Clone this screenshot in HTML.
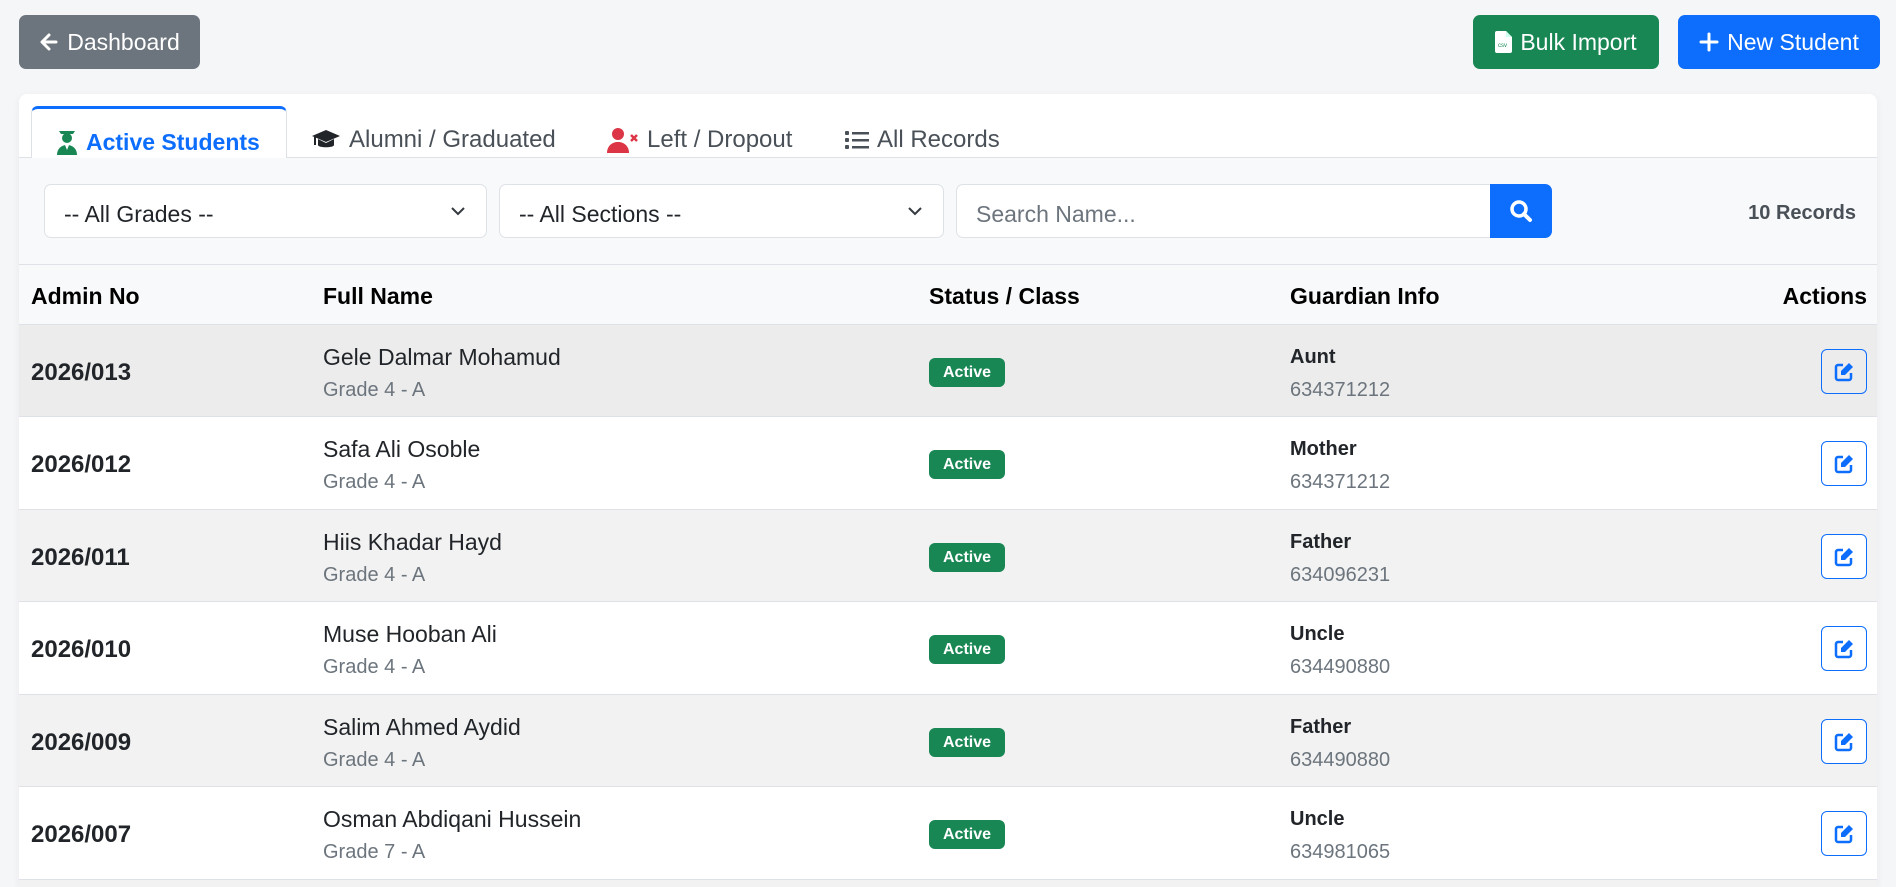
<!DOCTYPE html>
<html><head><meta charset="utf-8"><style>
*{box-sizing:border-box;margin:0;padding:0}
body{width:1896px;height:887px;overflow:hidden;background:#f5f6f8;font-family:"Liberation Sans",Arial,sans-serif;color:#212529;position:relative}
.abs{position:absolute}
.btn{position:absolute;border-radius:7px;color:#fff;font-size:23px;display:flex;align-items:center;justify-content:center;gap:8px}
.card{position:absolute;left:19px;top:94px;width:1858px;height:793px;background:#fff;border-radius:8px 8px 0 0;box-shadow:0 2px 8px rgba(0,0,0,.06);overflow:hidden}
.tab{position:absolute;top:20px;height:52px;font-size:24px;color:#495057;display:flex;align-items:center;gap:8px}
.sel{position:absolute;top:90px;height:54px;background:#fff;border:1px solid #dee2e6;border-radius:7px;font-size:23px;color:#212529;padding-left:19px;padding-top:6px;display:flex;align-items:center}
.chev{position:absolute;right:20px;top:18px}
.th{position:absolute;top:172px;height:60px;font-size:23px;font-weight:bold;color:#000;display:flex;align-items:center}
.row{position:absolute;left:0;width:1858px;height:92px;border-top:1px solid #dee2e6}
.adm{position:absolute;left:12px;top:2px;height:92px;display:flex;align-items:center;font-weight:bold;font-size:24px;color:#212529}
.nm{position:absolute;left:304px;top:19px;font-size:23px;color:#212529}
.sub{position:absolute;top:54px;font-size:20px;color:#6c757d}
.badge{position:absolute;left:910px;top:33px;width:76px;height:29px;background:#198754;color:#fff;border-radius:6px;font-weight:bold;font-size:16px;display:flex;align-items:center;justify-content:center}
.gd{position:absolute;left:1271px;top:21px;font-size:20px;font-weight:bold;color:#212529}
.ed{position:absolute;left:1802px;top:24px;width:46px;height:45px;border:1.5px solid #0d6efd;border-radius:6px;display:flex;align-items:center;justify-content:center}
</style></head><body>

<div class="btn" style="left:19px;top:15px;width:181px;height:54px;background:#6c757d">
<svg width="20" height="20" viewBox="0 0 20 20"><path d="M17 10H4M10 3L3 10l7 7" stroke="#fff" stroke-width="3" fill="none" stroke-linecap="round" stroke-linejoin="round"/></svg>Dashboard</div>

<div class="btn" style="left:1473px;top:15px;width:186px;height:54px;background:#198754">
<svg width="17" height="22" viewBox="0 0 17 22"><path d="M0 2a2 2 0 0 1 2-2h9l6 6v14a2 2 0 0 1-2 2H2a2 2 0 0 1-2-2z" fill="#fff"/><path d="M11 0v6h6" fill="#cfe" /><text x="3" y="16" font-size="6" fill="#198754" font-family="Liberation Sans">csv</text></svg>Bulk Import</div>

<div class="btn" style="left:1678px;top:15px;width:202px;height:54px;background:#0d6efd">
<svg width="20" height="20" viewBox="0 0 20 20"><path d="M10 2v16M2 10h16" stroke="#fff" stroke-width="3" stroke-linecap="round"/></svg>New Student</div>

<div class="card">
 <div class="abs" style="left:0;top:63px;width:1858px;height:1px;background:#dee2e6"></div>
 <div class="abs" style="left:12px;top:12px;width:256px;height:53px;background:#fff;border:1px solid #dee2e6;border-bottom:none;border-top:3px solid #0d6efd;border-radius:7px 7px 0 0"></div>
 <div class="tab" style="left:37px;color:#0d6efd;font-weight:bold;top:22px;font-size:23px">
  <svg width="22" height="26" viewBox="0 0 22 26"><path d="M3 2h16l-2 3H5z" fill="#198754"/><circle cx="11" cy="9" r="5" fill="#198754"/><path d="M1 26c0-6 4-10 10-10s10 4 10 10z" fill="#198754"/><path d="M9 16l2 5 2-5z" fill="#fff"/></svg>Active Students</div>
 <div class="tab" style="left:292px">
  <svg width="30" height="24" viewBox="0 0 30 24"><path d="M15 2L1 8l14 6 14-6z" fill="#212529"/><path d="M7 11v6c0 3 16 3 16 0v-6l-8 4z" fill="#212529"/><path d="M4 9v8" stroke="#212529" stroke-width="2"/></svg>Alumni / Graduated</div>
 <div class="tab" style="left:588px">
  <svg width="32" height="26" viewBox="0 0 32 26"><circle cx="11" cy="7" r="6" fill="#dc3545"/><path d="M0 26c0-7 5-11 11-11s11 4 11 11z" fill="#dc3545"/><path d="M24 8l6 6M30 8l-6 6" stroke="#dc3545" stroke-width="2.5"/></svg>Left / Dropout</div>
 <div class="tab" style="left:826px">
  <svg width="24" height="20" viewBox="0 0 24 20"><g fill="#495057"><rect x="0" y="1" width="4" height="4" rx="1"/><rect x="0" y="8" width="4" height="4" rx="1"/><rect x="0" y="15" width="4" height="4" rx="1"/><rect x="7" y="2" width="17" height="2.5"/><rect x="7" y="9" width="17" height="2.5"/><rect x="7" y="16" width="17" height="2.5"/></g></svg>All Records</div>

 <div class="abs" style="left:0;top:64px;width:1858px;height:106px;background:#f8f9fa"></div>
 <div class="sel" style="left:25px;width:443px">-- All Grades --<svg class="chev" width="16" height="16" viewBox="0 0 16 16"><path d="M2 5l6 6 6-6" stroke="#343a40" stroke-width="2" fill="none"/></svg></div>
 <div class="sel" style="left:480px;width:445px">-- All Sections --<svg class="chev" width="16" height="16" viewBox="0 0 16 16"><path d="M2 5l6 6 6-6" stroke="#343a40" stroke-width="2" fill="none"/></svg></div>
 <div class="sel" style="left:937px;width:536px;border-radius:7px 0 0 7px;color:#6c757d">Search Name...</div>
 <div class="abs" style="left:1471px;top:90px;width:62px;height:54px;background:#0d6efd;border-radius:0 7px 7px 0;display:flex;align-items:center;justify-content:center">
  <svg width="24" height="24" viewBox="0 0 24 24"><circle cx="10" cy="10" r="7" stroke="#fff" stroke-width="3.5" fill="none"/><path d="M15 15l6 6" stroke="#fff" stroke-width="4" stroke-linecap="round"/></svg></div>
 <div class="abs" style="right:21px;top:108px;font-size:20px;font-weight:bold;color:#495057">10 Records</div>

 <div class="abs" style="left:0;top:170px;width:1858px;height:60px;background:#f8f9fa;border-top:1px solid #dee2e6"></div>
 <div class="th" style="left:12px">Admin No</div>
 <div class="th" style="left:304px">Full Name</div>
 <div class="th" style="left:910px">Status / Class</div>
 <div class="th" style="left:1271px">Guardian Info</div>
 <div class="th" style="right:10px">Actions</div>

 <div class="row" style="top:230px;background:#ececec"><div class="adm">2026/013</div><div class="nm">Gele Dalmar Mohamud</div><div class="sub" style="left:304px">Grade 4 - A</div><div class="badge">Active</div><div class="gd">Aunt</div><div class="sub" style="left:1271px">634371212</div><div class="ed"><svg width="20" height="20" viewBox="0 0 20 20"><path d="M9 3H4a2 2 0 0 0-2 2v11a2 2 0 0 0 2 2h11a2 2 0 0 0 2-2v-5" stroke="#0d6efd" stroke-width="2.5" fill="none"/><path d="M15 1l4 4-8 8H7V9z" fill="#0d6efd"/></svg></div></div>
 <div class="row" style="top:322px;background:#fff"><div class="adm">2026/012</div><div class="nm">Safa Ali Osoble</div><div class="sub" style="left:304px">Grade 4 - A</div><div class="badge">Active</div><div class="gd">Mother</div><div class="sub" style="left:1271px">634371212</div><div class="ed"><svg width="20" height="20" viewBox="0 0 20 20"><path d="M9 3H4a2 2 0 0 0-2 2v11a2 2 0 0 0 2 2h11a2 2 0 0 0 2-2v-5" stroke="#0d6efd" stroke-width="2.5" fill="none"/><path d="M15 1l4 4-8 8H7V9z" fill="#0d6efd"/></svg></div></div>
 <div class="row" style="top:415px;background:#f2f2f2"><div class="adm">2026/011</div><div class="nm">Hiis Khadar Hayd</div><div class="sub" style="left:304px">Grade 4 - A</div><div class="badge">Active</div><div class="gd">Father</div><div class="sub" style="left:1271px">634096231</div><div class="ed" style="background:#fff"><svg width="20" height="20" viewBox="0 0 20 20"><path d="M9 3H4a2 2 0 0 0-2 2v11a2 2 0 0 0 2 2h11a2 2 0 0 0 2-2v-5" stroke="#0d6efd" stroke-width="2.5" fill="none"/><path d="M15 1l4 4-8 8H7V9z" fill="#0d6efd"/></svg></div></div>
 <div class="row" style="top:507px;background:#fff"><div class="adm">2026/010</div><div class="nm">Muse Hooban Ali</div><div class="sub" style="left:304px">Grade 4 - A</div><div class="badge">Active</div><div class="gd">Uncle</div><div class="sub" style="left:1271px">634490880</div><div class="ed"><svg width="20" height="20" viewBox="0 0 20 20"><path d="M9 3H4a2 2 0 0 0-2 2v11a2 2 0 0 0 2 2h11a2 2 0 0 0 2-2v-5" stroke="#0d6efd" stroke-width="2.5" fill="none"/><path d="M15 1l4 4-8 8H7V9z" fill="#0d6efd"/></svg></div></div>
 <div class="row" style="top:600px;background:#f2f2f2"><div class="adm">2026/009</div><div class="nm">Salim Ahmed Aydid</div><div class="sub" style="left:304px">Grade 4 - A</div><div class="badge">Active</div><div class="gd">Father</div><div class="sub" style="left:1271px">634490880</div><div class="ed" style="background:#fff"><svg width="20" height="20" viewBox="0 0 20 20"><path d="M9 3H4a2 2 0 0 0-2 2v11a2 2 0 0 0 2 2h11a2 2 0 0 0 2-2v-5" stroke="#0d6efd" stroke-width="2.5" fill="none"/><path d="M15 1l4 4-8 8H7V9z" fill="#0d6efd"/></svg></div></div>
 <div class="row" style="top:692px;background:#fff"><div class="adm">2026/007</div><div class="nm">Osman Abdiqani Hussein</div><div class="sub" style="left:304px">Grade 7 - A</div><div class="badge">Active</div><div class="gd">Uncle</div><div class="sub" style="left:1271px">634981065</div><div class="ed"><svg width="20" height="20" viewBox="0 0 20 20"><path d="M9 3H4a2 2 0 0 0-2 2v11a2 2 0 0 0 2 2h11a2 2 0 0 0 2-2v-5" stroke="#0d6efd" stroke-width="2.5" fill="none"/><path d="M15 1l4 4-8 8H7V9z" fill="#0d6efd"/></svg></div></div>
 <div class="row" style="top:785px;height:8px;background:#f2f2f2"></div>
</div>
</body></html>
